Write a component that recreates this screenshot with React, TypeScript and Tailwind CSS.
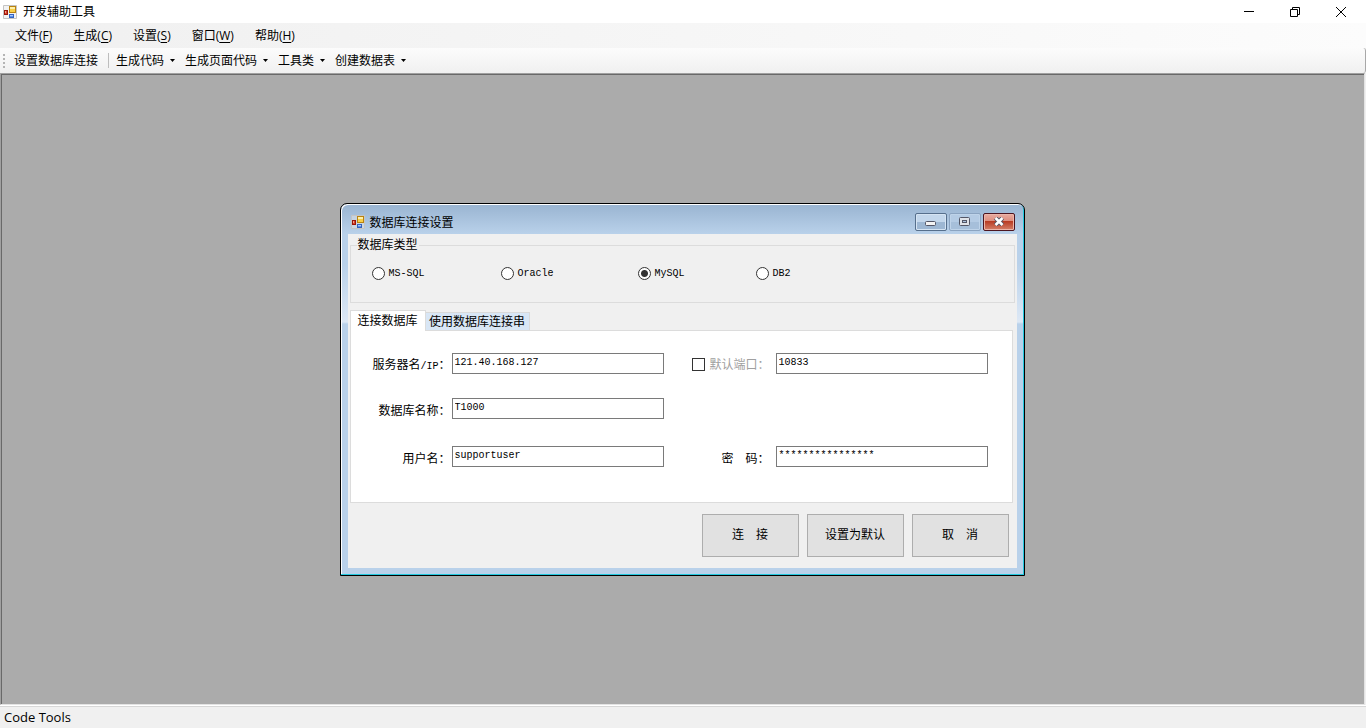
import type { ReactNode } from "react";

const menus = [
  { label: "文件", hotkey: "F" },
  { label: "生成", hotkey: "C" },
  { label: "设置", hotkey: "S" },
  { label: "窗口", hotkey: "W" },
  { label: "帮助", hotkey: "H" },
];

const toolMenus = ["生成代码", "生成页面代码", "工具类", "创建数据表"];

const dbTypes = ["MS-SQL", "Oracle", "MySQL", "DB2"];

function AppIcon({ className }: { className: string }) {
  return (
    <svg viewBox="0 0 14 14" className={className} aria-hidden="true">
      <path d="M.5.5h13v13H.5z" fill="#e6e6e6" fillOpacity=".5" stroke="#c4c4c4" />
      <rect x="6.500" y="1.500" width="6" height="6" fill="#f8cf49" stroke="#b98210" />
      <path d="M7 2h5v2H7z" fill="#fff0a8" />
      <rect x="1.500" y="5.500" width="3" height="4" fill="#d9432b" stroke="#98150a" />
      <path d="M2 6h1v2H2z" fill="#f4a08a" />
      <rect x="6.500" y="9.500" width="4" height="3" fill="#5b92ee" stroke="#3563bd" />
      <path d="M7 10h3v1H7z" fill="#a7c8fb" />
    </svg>
  );
}

function TitleBar() {
  return (
    <header className="flex h-[23px] items-center bg-white pr-[2px] pl-[3px]">
      <AppIcon className="size-[14px]" />
      <h1 className="ml-[6px] grow">开发辅助工具</h1>
      <button aria-label="最小化" className="flex h-full w-[46px] items-center justify-center">
        <svg viewBox="0 0 10 10" className="size-[10px]" stroke="#000">
          <path d="M0 4.500h10" />
        </svg>
      </button>
      <button aria-label="还原" className="flex h-full w-[46px] items-center justify-center">
        <svg viewBox="0 0 10 10" className="size-[10px]" fill="none" stroke="#000">
          <path d="M.5 2.500h7v7h-7zM2.500 2.500v-2h7v7h-2" />
        </svg>
      </button>
      <button aria-label="关闭" className="flex h-full w-[46px] items-center justify-center">
        <svg viewBox="0 0 10 10" className="size-[10px]" fill="none" stroke="#000">
          <path d="M0 0l10 10M10 0L0 10" />
        </svg>
      </button>
    </header>
  );
}

function MenuBar() {
  return (
    <nav className="flex h-[25px] items-center gap-[21px] bg-linear-to-r from-[#f0f0f0] to-[#fcfcfc] pl-[15px]">
      {menus.map((m) => (
        <button key={m.hotkey}>
          {m.label}(<span className="underline underline-offset-2">{m.hotkey}</span>)
        </button>
      ))}
    </nav>
  );
}

function ToolBar() {
  return (
    <div className="flex h-[25px] items-center rounded-r-[3px] border-r border-[#a8a8a8] bg-linear-to-b from-[#fcfcfc] to-[#f0f0f0] pl-[3px]">
      <svg viewBox="0 0 2 14" className="h-[14px] w-[2px]" fill="#b4b4b4" aria-hidden="true">
        <path d="M0 0h2v2H0zM0 4h2v2H0zM0 8h2v2H0zM0 12h2v2H0z" />
      </svg>
      <button className="ml-[9px]">设置数据库连接</button>
      <span className="mr-[7px] ml-[10px] h-[15px] w-px bg-[#bdbdbd]" />
      <div className="flex gap-[10px]">
        {toolMenus.map((label) => (
          <button key={label} className="flex items-center gap-[6px]">
            {label}
            <svg viewBox="0 0 5 3" className="h-[3px] w-[5px]" aria-hidden="true">
              <path d="M0 0h5L2.500 3z" />
            </svg>
          </button>
        ))}
      </div>
    </div>
  );
}

function CaptionButtons() {
  return (
    <div className="flex gap-[2px]">
      <button
        aria-label="最小化"
        className="flex h-[18px] w-[32px] items-center justify-center rounded-[2px] border border-[#566f8c] bg-linear-to-b from-[#c3d7ec] from-50% to-[#9db7d3] to-50% inset-ring inset-ring-[#d5e4f3]"
      >
        <svg viewBox="0 0 11 5" className="mt-[4px] h-[5px] w-[11px]">
          <rect x=".5" y=".5" width="10" height="4" rx="1" fill="#f4f4f4" stroke="#535666" />
        </svg>
      </button>
      <button
        aria-label="最大化"
        disabled
        className="flex h-[18px] w-[32px] items-center justify-center rounded-[2px] border border-[#8ba4c1] bg-linear-to-b from-[#b4cbe4] from-50% to-[#a6bfda] to-50% inset-ring inset-ring-[#bed3e9]"
      >
        <svg viewBox="0 0 11 9" className="h-[9px] w-[11px]" stroke="#535666">
          <rect x=".5" y=".5" width="10" height="8" rx="1" fill="#dfe2e8" />
          <rect x="3.500" y="3.500" width="4" height="2" fill="#a9c0dc" />
        </svg>
      </button>
      <button
        aria-label="关闭"
        className="flex h-[18px] w-[32px] items-center justify-center rounded-[2px] border border-[#4c1520] bg-[linear-gradient(#e8aca1,#dd8c7d_45%,#b83a22_45%,#d4806a)] inset-ring inset-ring-[#ecb5aa]"
      >
        <svg viewBox="0 0 12 9" className="h-[9px] w-[12px]" fill="none">
          <path d="M2.500 1L9.500 8M9.500 1L2.500 8" stroke="#535666" strokeWidth="4.500" />
          <path d="M2.500 1L9.500 8M9.500 1L2.500 8" stroke="#fff" strokeWidth="2.500" />
        </svg>
      </button>
    </div>
  );
}

// Half-width characters sit on a 6px grid, half of a full-width one.
function Half({ children }: { children: ReactNode }) {
  return <span className="font-['Liberation_Mono',monospace] text-[10px]">{children}</span>;
}

function FieldRow({ children }: { children: ReactNode }) {
  return (
    <div className="grid grid-cols-[101px_212px_112px_212px] grid-rows-[21px] items-center">{children}</div>
  );
}

function TextField({ id, value, label }: { id: string; value: string; label?: string }) {
  return (
    <input
      id={id}
      aria-label={label}
      defaultValue={value}
      className="h-[21px] w-full border border-[#7a7a7a] bg-white px-[2px] pb-[2px] font-['Liberation_Mono',monospace] text-[10px] outline-none"
    />
  );
}

function ActionButton({ children }: { children: ReactNode }) {
  return (
    <button className="h-[43px] w-[97px] border border-[#adadad] bg-[#e1e1e1] whitespace-pre">{children}</button>
  );
}

function ConnectionDialog() {
  return (
    <section
      role="dialog"
      aria-label="数据库连接设置"
      className="w-[685px] rounded-t-[7px] border border-black bg-[linear-gradient(#99b4d1,#b9d1ea_30px,#b9d1ea_60px,#dde8f5_118px,#b9d1ea_120px)] pb-[7px] shadow-[inset_-1px_-1px_#22c8de,inset_1px_1px_#fff]"
    >
      <div className="flex h-[30px] items-center pt-[6px] pr-[9px] pl-[10px]">
        <AppIcon className="size-[14px]" />
        <h2 className="ml-[5px] grow pt-[2px]">数据库连接设置</h2>
        <CaptionButtons />
      </div>

      <div className="mx-[7px] bg-[#f0f0f0] px-[2px] pt-[4px] pb-[11px]">
        <fieldset className="h-[65px] border border-[#dcdcdc] pl-[21px]">
          <legend className="-ml-[15px] h-[15px] px-px leading-[14px]">数据库类型</legend>
          <div className="grid grid-cols-[129px_137px_118px_auto] pt-[12px]">
            {dbTypes.map((name) => (
              <label key={name} className="flex items-center gap-[4px]">
                <input
                  type="radio"
                  name="dbType"
                  defaultChecked={name === "MySQL"}
                  className="size-[13px] appearance-none rounded-full border border-[#333] bg-white checked:bg-[radial-gradient(circle,#333_3px,#fff_4px)]"
                />
                <Half>{name}</Half>
              </label>
            ))}
          </div>
        </fieldset>

        <div role="tablist" className="mt-[7px] flex items-end">
          <button
            role="tab"
            aria-selected="true"
            className="relative -mb-px h-[21px] w-[76px] border border-b-0 border-[#dcdcdc] bg-white"
          >
            连接数据库
          </button>
          <button
            role="tab"
            aria-selected="false"
            className="h-[18px] w-[104px] border border-b-0 border-l-0 border-[#d9d9d9] bg-[#d8e6f5]"
          >
            使用数据库连接串
          </button>
        </div>

        <div role="tabpanel" className="mr-[2px] border border-[#dcdcdc] bg-white pt-[22px] pb-[35px]">
          <FieldRow>
            <label htmlFor="server" className="pt-[5px] pr-px text-right">
              服务器名<Half>/IP</Half>：
            </label>
            <TextField id="server" value="121.40.168.127" />
            <label className="flex items-center justify-end gap-[4px] pt-[3px] pr-[6px] text-[#a0a0a0]">
              <input type="checkbox" className="size-[13px] appearance-none border border-[#333] bg-white" />
              默认端口：
            </label>
            <TextField id="port" label="默认端口" value="10833" />
          </FieldRow>
          <div className="mt-[24px]">
            <FieldRow>
              <label htmlFor="database" className="pt-[5px] pr-px text-right">
                数据库名称：
              </label>
              <TextField id="database" value="T1000" />
            </FieldRow>
          </div>
          <div className="mt-[27px]">
            <FieldRow>
              <label htmlFor="user" className="pt-[5px] pr-px text-right">
                用户名：
              </label>
              <TextField id="user" value="supportuser" />
              <label htmlFor="password" className="pt-[5px] pr-[6px] text-right">
                密　码：
              </label>
              <TextField id="password" value="****************" />
            </FieldRow>
          </div>
        </div>

        <div className="mt-[11px] flex justify-end gap-[8px] pr-[6px]">
          <ActionButton>连　接</ActionButton>
          <ActionButton>设置为默认</ActionButton>
          <ActionButton>取　消</ActionButton>
        </div>
      </div>
    </section>
  );
}

export default function App() {
  return (
    <div className="flex min-h-screen flex-col bg-[#f0f0f0] font-['Open_Sans','Noto_Sans_CJK_SC',sans-serif] text-[12px] leading-[18px] text-black">
      <TitleBar />
      <MenuBar />
      <ToolBar />
      <main className="mr-px flex grow items-center justify-center border border-t-[#a0a0a0] border-r-[#e3e3e3] border-b-[#e3e3e3] border-l-[#a0a0a0] bg-[#ababab] pr-px shadow-[inset_1px_1px_#696969]">
        <ConnectionDialog />
      </main>
      <footer className="h-[23px] border-t border-white px-[4px] text-[13px] leading-[22px] shadow-[inset_0_1px_#d7d7d7]">
        Code Tools
      </footer>
    </div>
  );
}
